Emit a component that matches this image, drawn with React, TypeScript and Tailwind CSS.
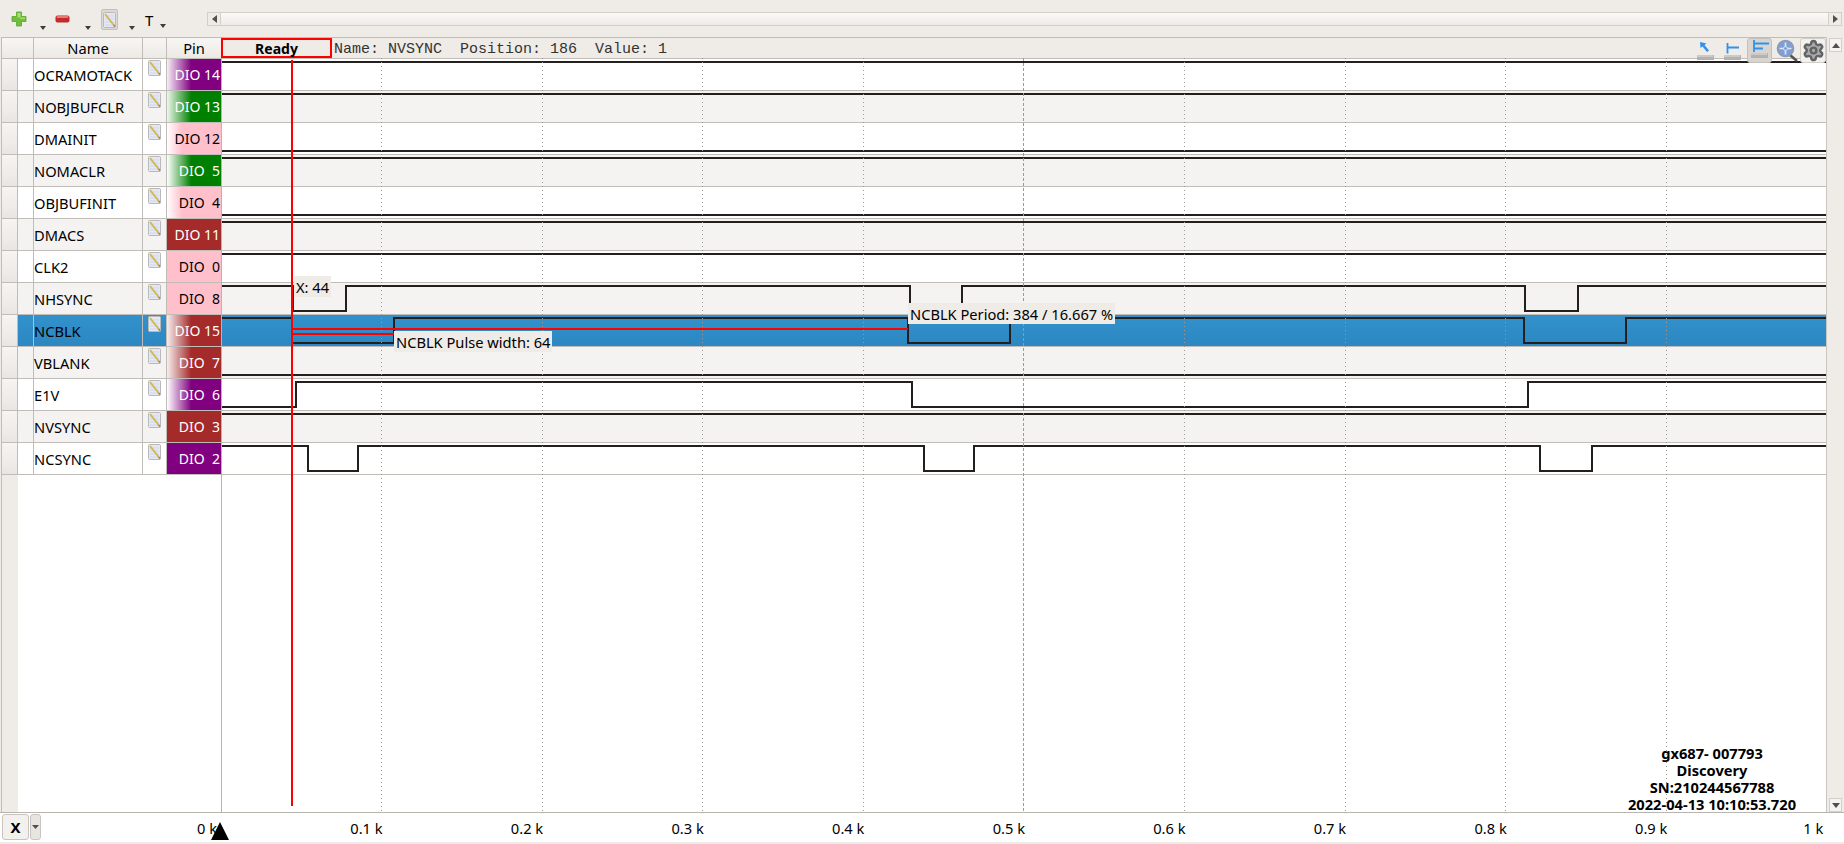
import React from 'react';
import { Settings } from 'lucide-react';

interface Signal {
  name: string;
  pin: string;
  pinClass: string;
  pinText: string;
  wave: string; // path in page coordinates
}

const ROW_H = 32;
const FIRST_ROW = 59;

const signals: Signal[] = [
  { name: 'OCRAMOTACK', pin: 'DIO 14', pinClass: 'bg-[linear-gradient(90deg,#f6eef6_0%,#800080_45%)]', pinText: 'text-white', wave: 'M222 62H1826' },
  { name: 'NOBJBUFCLR', pin: 'DIO 13', pinClass: 'bg-[linear-gradient(90deg,#eef6ee_0%,#008000_45%)]', pinText: 'text-white', wave: 'M222 94H1826' },
  { name: 'DMAINIT', pin: 'DIO 12', pinClass: 'bg-[linear-gradient(90deg,#ffffff_0%,#ffc0cb_28%)]', pinText: 'text-black', wave: 'M222 151H1826' },
  { name: 'NOMACLR', pin: 'DIO  5', pinClass: 'bg-[linear-gradient(90deg,#ffffff_0%,#008000_45%)]', pinText: 'text-white', wave: 'M222 158H1826' },
  { name: 'OBJBUFINIT', pin: 'DIO  4', pinClass: 'bg-[linear-gradient(90deg,#ffffff_0%,#ffc0cb_28%)]', pinText: 'text-black', wave: 'M222 215H1826' },
  { name: 'DMACS', pin: 'DIO 11', pinClass: 'bg-[#a52a2a]', pinText: 'text-white', wave: 'M222 222H1826' },
  { name: 'CLK2', pin: 'DIO  0', pinClass: 'bg-[#ffc0cb]', pinText: 'text-black', wave: 'M222 254H1826' },
  { name: 'NHSYNC', pin: 'DIO  8', pinClass: 'bg-[#ffc0cb]', pinText: 'text-black', wave: 'M222 286H293V311H346V286H910V311H962V286H1525V311H1578V286H1826' },
  { name: 'NCBLK', pin: 'DIO 15', pinClass: 'bg-[linear-gradient(90deg,#f6eeee_0%,#a52a2a_45%)]', pinText: 'text-white', wave: 'M222 318H292V343H394V318H908V343H1010V318H1524V343H1626V318H1826' },
  { name: 'VBLANK', pin: 'DIO  7', pinClass: 'bg-[linear-gradient(90deg,#f6eeee_0%,#a52a2a_45%)]', pinText: 'text-white', wave: 'M222 375H1826' },
  { name: 'E1V', pin: 'DIO  6', pinClass: 'bg-[linear-gradient(90deg,#ffffff_0%,#800080_45%)]', pinText: 'text-white', wave: 'M222 407H296V382H912V407H1528V382H1826' },
  { name: 'NVSYNC', pin: 'DIO  3', pinClass: 'bg-[#a52a2a]', pinText: 'text-white', wave: 'M222 414H1826' },
  { name: 'NCSYNC', pin: 'DIO  2', pinClass: 'bg-[#800080]', pinText: 'text-white', wave: 'M222 446H308V471H358V446H924V471H974V446H1540V471H1592V446H1826' },
];

const SELECTED = 'NCBLK';
const axisLabels = ['0.1 k', '0.2 k', '0.3 k', '0.4 k', '0.5 k', '0.6 k', '0.7 k', '0.8 k', '0.9 k'];

const Caret = ({ className }: { className: string }) => (
  <svg width="6" height="4" viewBox="0 0 6 4" className={className}>
    <path d="M0 0H6L3 4Z" fill="#3c3c3c" />
  </svg>
);

const NoteIcon = () => (
  <svg width="13" height="16" viewBox="0 0 13 16">
    <rect x="0.5" y="0.5" width="12" height="15" rx="1" fill="#e4e8f2" stroke="#b9b9b9" />
    <path d="M2 4H11M2 7H11M2 10H11M2 13H11" stroke="#c6d0e4" strokeWidth="0.7" />
    <path d="M2 2L11.5 14" stroke="#d2b64a" strokeWidth="1.8" />
    <path d="M10.5 12.8L12 14.8" stroke="#9a7fa8" strokeWidth="1.4" />
  </svg>
);

const Ruler = () => (
  <g>
    <rect x="0" y="15" width="17" height="5" fill="#b4b2ae" />
    <path d="M1 15V17M3 15V17M5 15V17M7 15V17M9 15V17M11 15V17M13 15V17M15 15V17" stroke="#f1efec" strokeWidth="0.8" />
  </g>
);

const CursorTool = () => (
  <svg width="18" height="25" viewBox="0 -1 18 25">
    <g transform="translate(0 1)">
      <Ruler />
      <path d="M3 2L3.5 8L5.5 6.5L10 12L12 10.5L7.5 5L9.5 3.5Z" fill="#2f93ee" />
    </g>
  </svg>
);

const SingleMarkTool = () => (
  <svg width="18" height="25" viewBox="0 -1 18 25">
    <g transform="translate(0 1)">
      <Ruler />
      <path d="M3.5 3V13.5M3.5 7.5H15" stroke="#2f93ee" strokeWidth="1.8" fill="none" />
    </g>
  </svg>
);

const PairMarkTool = () => (
  <div className="w-[25px] h-[25px] bg-[#d8d5d1] border border-[#c4c1bd] rounded-[3px] flex items-start justify-center">
    <svg width="19" height="23" viewBox="0 0 19 23">
      <path d="M4 1V13M4 4.5H19M4 9.5H13" stroke="#2f93ee" strokeWidth="1.8" fill="none" />
      <g transform="translate(1 -1)">
        <Ruler />
      </g>
    </svg>
  </div>
);

const ZoomTool = () => (
  <svg width="23" height="25" viewBox="0 0 23 25">
    <path d="M14 17L21 23" stroke="#55524f" strokeWidth="2.6" />
    <circle cx="9.5" cy="10.5" r="8" fill="#7f9fd6" stroke="#8d9bb0" strokeWidth="1.6" />
    <path d="M9.5 4.5V8M9.5 13V16.5M3.5 10.5H7M12 10.5H15.5" stroke="#dfe8f8" strokeWidth="1.6" />
    <circle cx="9.5" cy="10.5" r="2" fill="none" stroke="#dfe8f8" strokeWidth="1" />
  </svg>
);

const GearTool = () => (
  <div className="w-[26px] h-[25px] bg-[#f3f1ee] border border-[#d2cfcb] rounded-[3px] flex items-center justify-center">
    <Settings size={23} strokeWidth={2.6} color="#626365" fill="#a9abad" />
  </div>
);

const NameRow = ({ s, odd }: { s: Signal; odd: boolean }) => {
  const selected = s.name === SELECTED;
  const cellBg = selected
    ? 'bg-[linear-gradient(180deg,#3291cb,#2c87c2)]'
    : odd
      ? 'bg-[#f5f3f1]'
      : 'bg-white';
  return (
    <div className="flex h-[32px] border-b border-[#c0bdb9]">
      <div className="w-[16px] shrink-0 border-r border-[#c0bdb9] bg-[linear-gradient(180deg,#f7f5f3,#e9e6e2)]" />
      <div className={`w-[16px] shrink-0 border-r border-[#c0bdb9] ${cellBg}`} />
      <div className={`w-[109px] shrink-0 border-r border-[#c0bdb9] flex items-center ${cellBg}`}>
        <span className="text-black">{s.name}</span>
      </div>
      <div className={`w-[24px] shrink-0 border-r border-[#c0bdb9] flex justify-center pt-[1px] ${cellBg}`}>
        <NoteIcon />
      </div>
      <div className={`w-[54px] shrink-0 flex items-center justify-end pr-px text-[14px] ${s.pinClass} ${s.pinText}`}>
        <span className="whitespace-pre">{s.pin}</span>
      </div>
    </div>
  );
};

const WaveRow = ({ s, index }: { s: Signal; index: number }) => {
  const selected = s.name === SELECTED;
  const bg = selected
    ? 'bg-[linear-gradient(180deg,#3291cb,#2c87c2)]'
    : index % 2 === 1
      ? 'bg-[#f5f3f1]'
      : 'bg-white';
  const top = FIRST_ROW + index * ROW_H;
  return (
    <div className={`h-[32px] border-b border-[#c0bdb9] ${bg}`}>
      <svg width="1604" height="31" viewBox={`222 ${top} 1604 31`} className="block overflow-visible">
        <path d={s.wave} fill="none" stroke="#231f1e" strokeWidth="2" />
      </svg>
    </div>
  );
};

const GridLines = () => (
  <svg width="1604" height="754" viewBox="222 58 1604 754" className="absolute left-0 top-[21px] pointer-events-none">
    {axisLabels.map((label, i) => {
      const x = Math.round(381 + i * 160.6) + 0.5;
      return (
        <line
          key={label}
          x1={x}
          x2={x}
          y1={58}
          y2={812}
          stroke="#9c9a98"
          strokeWidth="1"
          strokeDasharray={label === '0.5 k' ? '3 2' : '1 3'}
        />
      );
    })}
  </svg>
);

const App: React.FC = () => {
  return (
    <div className="w-[1844px] h-[844px] overflow-hidden bg-[#efebe7] flex flex-col font-['Noto_Sans',sans-serif] text-[14.67px] text-black">
      {/* toolbar */}
      <div className="h-[37px] shrink-0 flex items-start">
        <svg width="16" height="16" viewBox="0 0 16 16" className="ml-[11px] mt-[11px]">
          <path d="M5.5 1H10.5V5.5H15V10.5H10.5V15H5.5V10.5H1V5.5H5.5Z" fill="#6fbe3c" stroke="#5aa52c" strokeWidth="0.8" />
          <path d="M6.5 2H9.5V6.5H14V8H9.5V6.5H6.5Z" fill="#a8e06e" />
        </svg>
        <Caret className="ml-[13px] mt-[26px]" />
        <svg width="15" height="8" viewBox="0 0 15 8" className="ml-[9px] mt-[15px]">
          <rect x="0.5" y="0.5" width="14" height="7" rx="2" fill="#c22a2c" />
          <rect x="1.5" y="1" width="12" height="2" rx="1" fill="#e67a7a" />
        </svg>
        <Caret className="ml-[15px] mt-[26px]" />
        <div className="ml-[10px] mt-[9px] w-[17px] h-[21px] bg-[#dcd9d5] border border-[#c4c1bd] rounded-[2px] flex items-center justify-center">
          <NoteIcon />
        </div>
        <Caret className="ml-[11px] mt-[26px]" />
        <span className="ml-[10px] mt-[12px] w-[9px] leading-[16px] text-[15px]">T</span>
        <Caret className="ml-[6px] mt-[24px]" />
        <div className="ml-[41px] mt-[12px] flex-1 mr-[2px] h-[14px] flex bg-[linear-gradient(180deg,#fbfaf9,#eeebe7)] border border-[#d2cfcb]">
          <div className="w-[13px] border-r border-[#d2cfcb] flex items-center justify-center bg-[#efebe7]">
            <svg width="5" height="8" viewBox="0 0 5 8"><path d="M5 0V8L0 4Z" fill="#505050" /></svg>
          </div>
          <div className="flex-1" />
          <div className="w-[13px] border-l border-[#d2cfcb] flex items-center justify-center bg-[#efebe7]">
            <svg width="5" height="8" viewBox="0 0 5 8"><path d="M0 0V8L5 4Z" fill="#505050" /></svg>
          </div>
        </div>
      </div>

      {/* table and plot */}
      <div className="h-[775px] shrink-0 flex">
        <div className="w-[221px] shrink-0 pl-px flex flex-col">
          <div className="flex-1 border-l border-[#c0bdb9] flex flex-col bg-white">
            <div className="h-[22px] shrink-0 flex border-y border-[#c0bdb9] bg-[linear-gradient(180deg,#f8f6f4,#ece9e5)]">
              <div className="w-[32px] border-r border-[#c0bdb9]" />
              <div className="w-[109px] border-r border-[#c0bdb9] flex items-center justify-center">Name</div>
              <div className="w-[24px] border-r border-[#c0bdb9]" />
              <div className="w-[54px] flex items-center justify-center">Pin</div>
            </div>
            {signals.map((s, i) => (
              <NameRow key={s.name} s={s} odd={i % 2 === 1} />
            ))}
            <div className="flex-1 flex">
              <div className="w-[16px] bg-[#efebe7]" />
            </div>
          </div>
        </div>

        <div className="w-[1605px] shrink-0 relative border-l border-[#b8b5b1] flex flex-col bg-white">
          <div className="h-[22px] shrink-0 flex items-center bg-[#efebe7] border-t border-[#c0bdb9] border-b">
            <div className="-ml-px w-[111px] h-[20px] border-2 border-[#ff0000] flex items-center justify-center font-bold text-[14px]">
              Ready
            </div>
            <span className="ml-[2px] pt-[5px] whitespace-pre font-['Liberation_Mono',monospace] text-[15px] text-[#333333]">
              {'Name: NVSYNC  Position: 186  Value: 1'}
            </span>
          </div>
          {signals.map((s, i) => (
            <WaveRow key={s.name} s={s} index={i} />
          ))}
          <GridLines />

          {/* cursors and measures lying over the plot */}
          <div className="absolute left-[72px] top-[239px] h-[21px] px-[2px] flex items-center bg-[#efebe7]">X: 44</div>
          <div className="absolute left-[172px] top-[294px] h-[21px] px-[2px] flex items-center bg-[#efebe7]">NCBLK Pulse width: 64</div>
          <div className="absolute left-[686px] top-[266px] h-[21px] px-[2px] flex items-center bg-[#efebe7]">NCBLK Period: 384 / 16.667 %</div>
          <div className="absolute left-[69px] top-[23px] w-[2px] h-[746px] bg-[#ff0000]" />
          <div className="absolute left-[69px] top-[291px] w-[617px] h-[2px] bg-[#ff0000]" />
          <div className="absolute left-[69px] top-[296px] w-[103px] h-[2px] bg-[#ff0000]" />

          <div className="absolute right-0 top-[1px] w-[129px] h-[25px] flex items-start">
            <CursorTool />
            <div className="ml-[9px]"><SingleMarkTool /></div>
            <div className="ml-[5px]"><PairMarkTool /></div>
            <div className="ml-[4px]"><ZoomTool /></div>
            <div className="ml-[1px]"><GearTool /></div>
          </div>

          <div className="absolute left-[1340px] top-[708px] w-[300px] text-center font-bold leading-[17px]">
            <div>gx687- 007793</div>
            <div>Discovery</div>
            <div>SN:210244567788</div>
            <div>2022-04-13 10:10:53.720</div>
          </div>
        </div>

        {/* vertical scrollbar */}
        <div className="w-[18px] shrink-0 pt-px flex flex-col pl-[2px] pr-[2px] border-l border-[#c8c5c1]">
          <div className="h-[14px] bg-[#f6f4f2] border border-[#d2cfcb] flex items-center justify-center">
            <svg width="8" height="5" viewBox="0 0 8 5"><path d="M0 5H8L4 0Z" fill="#505050" /></svg>
          </div>
          <div className="flex-1 bg-[#efebe7]" />
          <div className="h-[14px] bg-[#f6f4f2] border border-[#d2cfcb] flex items-center justify-center">
            <svg width="8" height="5" viewBox="0 0 8 5"><path d="M0 0H8L4 5Z" fill="#505050" /></svg>
          </div>
        </div>
      </div>

      {/* x axis */}
      <div className="h-[30px] shrink-0 bg-white border-t border-[#b8b5b1] flex relative">
        <div className="w-[222px] shrink-0 flex items-start pl-[2px] pt-px">
          <div className="w-[27px] h-[26px] bg-[#f3f1ee] border border-[#c8c5c1] rounded-[3px] flex items-center justify-center font-bold text-[15px]">
            X
          </div>
          <div className="ml-px w-[11px] h-[26px] bg-[#e8e5e1] border border-[#c8c5c1] rounded-[3px] flex items-center justify-center">
            <svg width="7" height="4" viewBox="0 0 7 4"><path d="M0 0H7L3.5 4Z" fill="#505050" /></svg>
          </div>
          <span className="ml-auto mr-[5px] mt-[3px]">0 k</span>
        </div>
        {axisLabels.map((label) => (
          <div key={label} className="w-[160.6px] shrink-0 text-right pt-[4px]">
            {label}
          </div>
        ))}
        <div className="w-[156px] shrink-0 text-right pt-[4px]">1 k</div>
        <svg width="18" height="18" viewBox="0 0 18 18" className="absolute left-[211px] top-[9px]">
          <path d="M9 0L18 18H0Z" fill="#000000" />
        </svg>
      </div>
    </div>
  );
};

export default App;
